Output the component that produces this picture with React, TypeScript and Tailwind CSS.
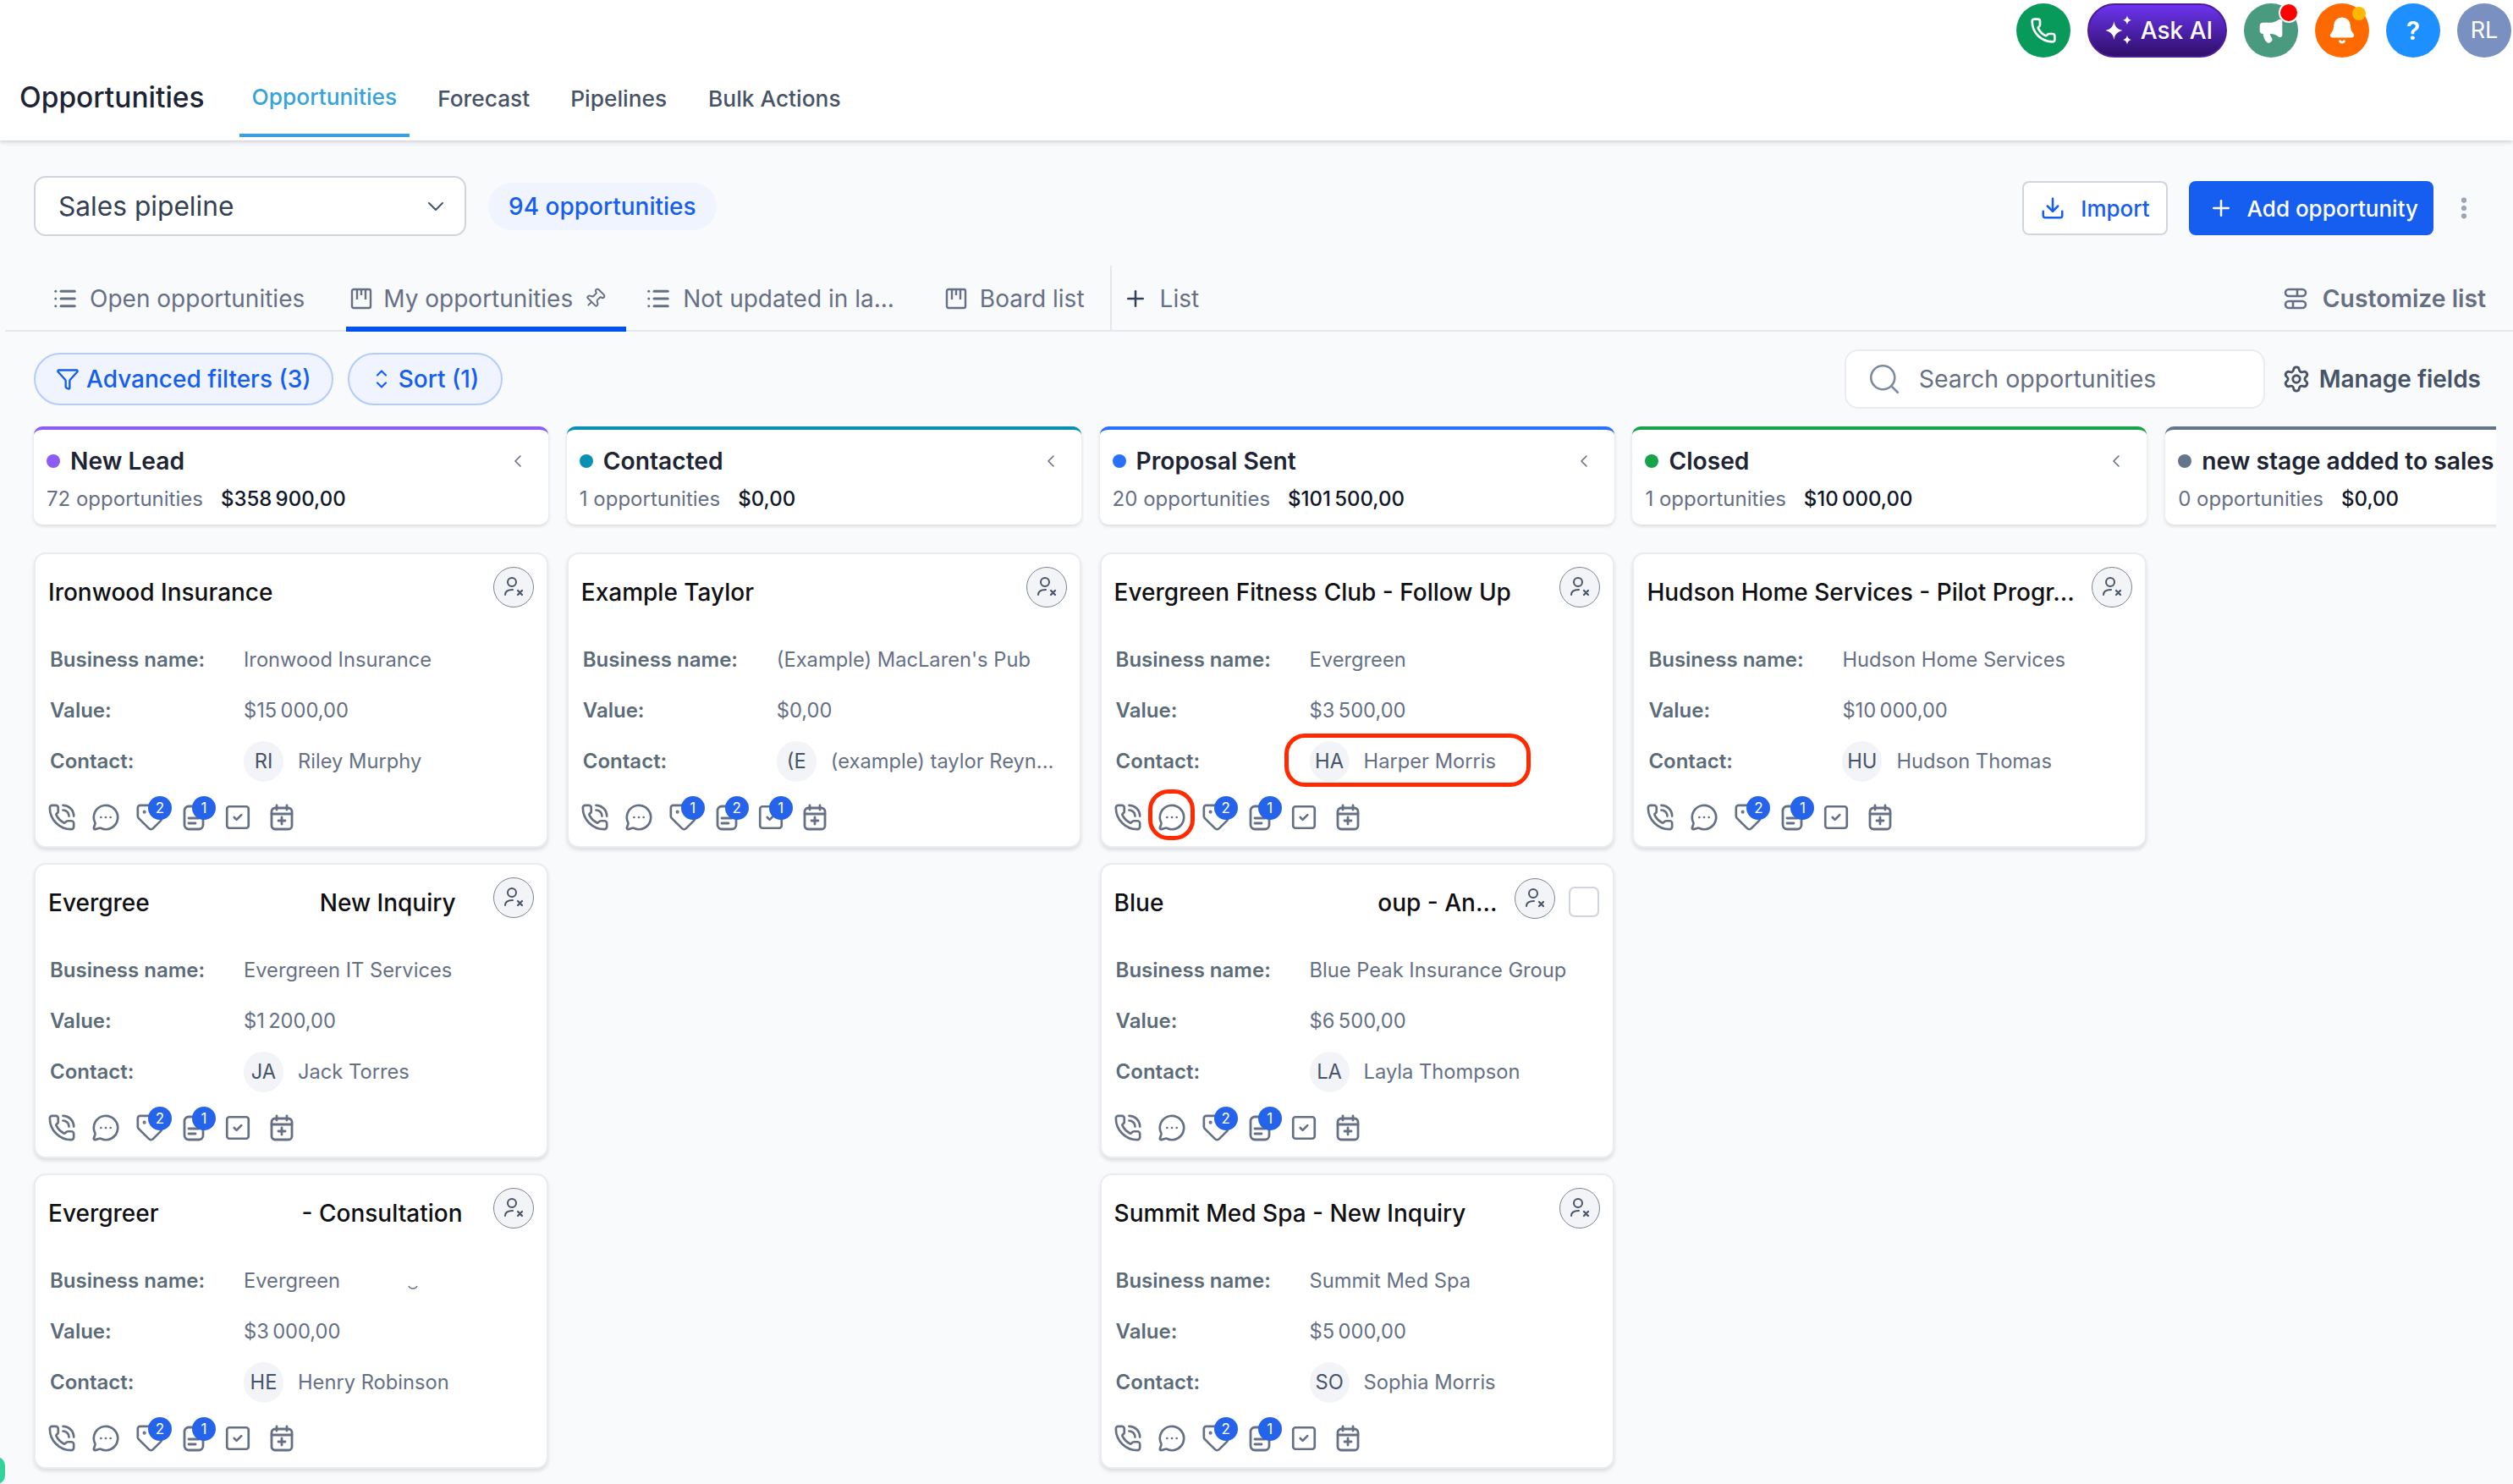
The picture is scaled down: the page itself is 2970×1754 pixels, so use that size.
import {
  Bell,
  ChevronDown,
  ChevronLeft,
  ChevronUp,
  Download,
  EllipsisVertical,
  Funnel,
  List,
  Megaphone,
  MessageCircleMore,
  Phone,
  PhoneCall,
  Pin,
  Plus,
  Search,
  Settings,
  SquareCheck,
  Tag,
} from "lucide-react";
import type { ReactNode } from "react";

interface Deal {
  title: ReactNode;
  business: ReactNode;
  value: string;
  initials: string;
  contact: string;
  badges: [number, number, number?];
  checkbox?: boolean;
}

interface Stage {
  name: string;
  dot: string;
  bar: string;
  count: number;
  total: string;
  deals: Deal[];
  tail?: boolean;
}

const stages: Stage[] = [
  {
    name: "New Lead",
    dot: "bg-[#8b5cf6]",
    bar: "border-t-[#8b5cf6]",
    count: 72,
    total: "$358\u202f900,00",
    tail: true,
    deals: [
      {
        title: "Ironwood Insurance",
        business: "Ironwood Insurance",
        value: "$15\u202f000,00",
        initials: "RI",
        contact: "Riley Murphy",
        badges: [2, 1],
      },
      {
        title: (
          <>
            Evergree<span className="ml-[201px]">New Inquiry</span>
          </>
        ),
        business: "Evergreen IT Services",
        value: "$1\u202f200,00",
        initials: "JA",
        contact: "Jack Torres",
        badges: [2, 1],
      },
      {
        title: (
          <>
            Evergreer<span className="ml-[169px]">- Consultation</span>
          </>
        ),
        business: (
          <>
            Evergreen
            <svg width="12" height="6" viewBox="0 0 12 6" fill="none" stroke="#667085" strokeWidth="1.600" className="ml-[80px] mt-[16px]">
              <path d="M1 1c2 4 8 4 10 0" />
            </svg>
          </>
        ),
        value: "$3\u202f000,00",
        initials: "HE",
        contact: "Henry Robinson",
        badges: [2, 1],
      },
    ],
  },
  {
    name: "Contacted",
    dot: "bg-[#0891b2]",
    bar: "border-t-[#0891b2]",
    count: 1,
    total: "$0,00",
    deals: [
      {
        title: "Example Taylor",
        business: "(Example) MacLaren's Pub",
        value: "$0,00",
        initials: "(E",
        contact: "(example) taylor Reyn...",
        badges: [1, 2, 1],
      },
    ],
  },
  {
    name: "Proposal Sent",
    dot: "bg-[#2970ff]",
    bar: "border-t-[#2970ff]",
    count: 20,
    total: "$101\u202f500,00",
    tail: true,
    deals: [
      {
        title: "Evergreen Fitness Club - Follow Up",
        business: "Evergreen",
        value: "$3\u202f500,00",
        initials: "HA",
        contact: "Harper Morris",
        badges: [2, 1],
      },
      {
        title: (
          <>
            Blue<span className="ml-[253px]">oup - An...</span>
          </>
        ),
        business: "Blue Peak Insurance Group",
        value: "$6\u202f500,00",
        initials: "LA",
        contact: "Layla Thompson",
        badges: [2, 1],
        checkbox: true,
      },
      {
        title: "Summit Med Spa - New Inquiry",
        business: "Summit Med Spa",
        value: "$5\u202f000,00",
        initials: "SO",
        contact: "Sophia Morris",
        badges: [2, 1],
      },
    ],
  },
  {
    name: "Closed",
    dot: "bg-[#16a34a]",
    bar: "border-t-[#16a34a]",
    count: 1,
    total: "$10\u202f000,00",
    deals: [
      {
        title: "Hudson Home Services - Pilot Progr...",
        business: "Hudson Home Services",
        value: "$10\u202f000,00",
        initials: "HU",
        contact: "Hudson Thomas",
        badges: [2, 1],
      },
    ],
  },
];

function Sparkle() {
  return (
    <svg width="40" height="40" viewBox="0 0 36 36" fill="white">
      <path d="M13 8c1 6 3 8 9 10-6 2-8 4-9 10-1-6-3-8-9-10 6-2 8-4 9-10z" />
      <path d="M27 2c.6 3 1.6 4 4.5 5-2.900 1-3.900 2-4.500 5-.6-3-1.600-4-4.500-5 2.900-1 3.900-2 4.500-5z" />
      <path d="M27 23c.6 3 1.600 4 4.500 5-2.900 1-3.900 2-4.500 5-.6-3-1.600-4-4.500-5 2.900-1 3.900-2 4.500-5z" />
    </svg>
  );
}

function BoardIcon() {
  return (
    <svg width="26" height="26" viewBox="0 0 26 26" fill="none" stroke="#667085" strokeWidth="2.4">
      <rect x="2" y="2" width="22" height="22" rx="2" />
      <path d="M8 2v12M13 2v7M18 2v12" />
    </svg>
  );
}

function CustomizeIcon() {
  return (
    <svg width="28" height="28" viewBox="0 0 28 28" fill="none" stroke="#667085" strokeWidth="2.6">
      <rect x="2" y="3" width="24" height="8" rx="4" />
      <rect x="2" y="17" width="24" height="8" rx="4" />
      <path d="M16 3v8M11 17v8" />
    </svg>
  );
}

function NoteIcon() {
  return (
    <svg width="26" height="32" viewBox="0 0 26 32" fill="none" stroke="#667085" strokeWidth="2.800" strokeLinecap="round">
      <rect x="2" y="3" width="22" height="27" rx="5" />
      <path d="M7 17h12M7 23h8" />
    </svg>
  );
}

function CalendarIcon() {
  return (
    <svg width="28" height="32" viewBox="0 0 28 32" fill="none" stroke="#667085" strokeWidth="2.800" strokeLinecap="round">
      <rect x="2" y="5" width="24" height="25" rx="4" />
      <path d="M2 12h24M8 2v5M20 2v5M14 16v8M10 20h8" />
    </svg>
  );
}

function UnassignedIcon() {
  return (
    <svg width="28" height="28" viewBox="0 0 28 28" fill="none" stroke="#475467" strokeWidth="2" strokeLinecap="round">
      <circle cx="12" cy="8" r="5" />
      <path d="M4 23c0-4 3-6 9-6" />
      <path d="M19 18l5 5M24 18l-5 5" strokeWidth="2.200" />
    </svg>
  );
}

function Badge({ n }: { n: number }) {
  return (
    <span className="absolute left-[24px] top-[-9px] flex h-[28px] w-[28px] items-center justify-center rounded-full bg-[#2563eb] text-[17px] leading-none text-white">
      {n}
    </span>
  );
}

function ActionIcons({ badges }: { badges: Deal["badges"] }) {
  const [first, second, third] = badges;
  return (
    <div className="ml-[-10px] flex h-[32px] items-center text-[#667085]">
      <span className="flex w-[52px] justify-center">
        <PhoneCall size={34} strokeWidth={1.900} />
      </span>
      <span className="flex w-[52px] justify-center">
        <MessageCircleMore size={34} strokeWidth={1.900} />
      </span>
      <span className="relative flex h-[32px] w-[52px] items-center justify-center">
        <Tag size={34} strokeWidth={1.900} />
        <Badge n={first} />
      </span>
      <span className="relative flex h-[32px] w-[52px] items-center justify-center">
        <NoteIcon />
        <Badge n={second} />
      </span>
      <span className="relative flex h-[32px] w-[52px] items-center justify-center">
        <SquareCheck size={34} strokeWidth={1.900} />
        {third ? <Badge n={third} /> : null}
      </span>
      <span className="flex w-[52px] justify-center">
        <CalendarIcon />
      </span>
    </div>
  );
}

function DealCard({ deal }: { deal: Deal }) {
  return (
    <div className="relative h-[349px] shrink-0 rounded-[14px] border-2 border-[#eaecf0] bg-white pl-[15px] pr-[15px] pt-[15px] shadow-[0_3px_4px_rgba(16,24,40,0.12)]">
      <div className="flex h-[48px] items-start">
        <div className="mt-[13px] flex-1 whitespace-nowrap text-[28px] font-medium leading-[34px] text-[#101014]">
          {deal.title}
        </div>
        <span className={`flex h-[48px] w-[48px] items-center justify-center rounded-full border border-[#7d8592] bg-[#f2f4f7] ${deal.checkbox ? "mr-[16px] mt-[1px]" : ""}`}>
          <UnassignedIcon />
        </span>
        {deal.checkbox ? (
          <span className="mr-[1px] mt-[11px] h-[36px] w-[36px] rounded-[7px] border-2 border-[#d0d5dd] bg-white" />
        ) : null}
      </div>
      <div className="mt-[32px] grid grid-cols-[229px_1fr] items-center pl-[2px] text-[23.7px] text-[#667085]">
        <div className="flex h-[60px] items-center text-[24px] font-semibold text-[#5b6b78]">Business name:</div>
        <div className="flex h-[60px] items-center whitespace-nowrap">{deal.business}</div>
        <div className="flex h-[60px] items-center text-[24px] font-semibold text-[#5b6b78]">Value:</div>
        <div className="flex h-[60px] items-center whitespace-nowrap">{deal.value}</div>
        <div className="flex h-[60px] items-center text-[24px] font-semibold text-[#5b6b78]">Contact:</div>
        <div className="flex h-[60px] items-center whitespace-nowrap">
          <span className="mr-[17px] flex h-[48px] w-[47px] items-center justify-center rounded-full bg-[#f2f4f7] text-[#475467]">
            {deal.initials}
          </span>
          {deal.contact}
        </div>
      </div>
      <div className="mt-[20px]">
        <ActionIcons badges={deal.badges} />
      </div>
    </div>
  );
}

function StageHeader({ name, dot, bar, count, total, collapse = true }: { name: string; dot: string; bar: string; count: number; total: string; collapse?: boolean }) {
  return (
    <div className={`h-[116px] shrink-0 overflow-hidden rounded-[10px] border-t-4 bg-white pl-[15px] shadow-[0_2px_4px_rgba(16,24,40,0.14)] ${bar}`}>
      <div className="mt-[20px] flex h-[34px] items-center">
        <span className={`mr-[12px] h-[16px] w-[16px] shrink-0 rounded-full ${dot}`} />
        <span className="flex-1 whitespace-nowrap text-[28.2px] font-semibold text-[#1d2433]">{name}</span>
        {collapse ? <ChevronLeft size={24} strokeWidth={1.6} className="mr-[24px] text-[#667085]" /> : null}
      </div>
      <div className="mt-[10px] flex items-center whitespace-nowrap text-[24px]">
        <span className="mr-[21px] text-[#667085]">{count} opportunities</span>
        <span className="font-medium text-[#101828]">{total}</span>
      </div>
    </div>
  );
}

export default function App() {
  return (
    <div className="relative h-[1754px] w-[2970px] overflow-hidden bg-[#f9fafb] [font-family:Inter,sans-serif]">
      <header className="h-[166px] bg-white shadow-[0_2px_5px_rgba(16,24,40,0.18)]">
        <div className="flex h-[68px] items-end justify-end gap-[20px] pr-[2px]">
          <span className="flex h-[64px] w-[64px] items-center justify-center rounded-full bg-[#079a5a] text-white">
            <Phone size={32} strokeWidth={2} />
          </span>
          <span className="flex h-[64px] w-[165px] items-center justify-center gap-[6px] rounded-full border-2 border-[#4c1d95] bg-gradient-to-b from-[#6d35f0] to-[#2f0f6b] text-[28px] font-medium text-white">
            <Sparkle />
            Ask AI
          </span>
          <span className="relative flex h-[64px] w-[64px] items-center justify-center rounded-full bg-[#4a9a80] text-white">
            <Megaphone size={32} fill="white" strokeWidth={2} />
            <span className="absolute right-[-1px] top-[-1px] h-[24px] w-[24px] rounded-full border-2 border-white bg-[#ff0000]" />
          </span>
          <span className="relative flex h-[64px] w-[64px] items-center justify-center rounded-full bg-[#ff6a00] text-white">
            <Bell size={34} fill="white" strokeWidth={2} />
            <span className="absolute right-[4px] top-[4px] h-[16px] w-[16px] rounded-full bg-[#ffb800]" />
          </span>
          <span className="flex h-[64px] w-[64px] items-center justify-center rounded-full bg-[#1e8fff] text-[30px] font-semibold text-white">
            ?
          </span>
          <span className="flex h-[64px] w-[64px] items-center justify-center rounded-full bg-[#7a90c0] text-[27px] text-white">
            RL
          </span>
        </div>
        <div className="flex h-[94px] items-center pl-[23px]">
          <h1 className="mr-[41px] text-[33.5px] font-medium text-[#1d2433]">Opportunities</h1>
          <nav className="flex h-full items-center text-[26.3px] font-medium text-[#475467]">
            <span className="mr-[33px] flex h-full items-center border-b-4 border-[#37a3dc] px-[15px] pt-[4px] text-[#37a3dc]">Opportunities</span>
            <span className="mr-[48px] mt-[4px]">Forecast</span>
            <span className="mr-[49px] mt-[4px]">Pipelines</span>
            <span className="mt-[4px]">Bulk Actions</span>
          </nav>
        </div>
      </header>

      <div className="mt-[42px] flex h-[71px] items-center pl-[40px] pr-[42px]">
        <div className="flex h-[71px] w-[511px] items-center justify-between rounded-[14px] border-2 border-[#d0d5dd] bg-white pl-[27px] pr-[18px] text-[31.7px] text-[#344054]">
          Sales pipeline
          <ChevronDown size={32} strokeWidth={1.5} className="text-[#475467]" />
        </div>
        <span className="ml-[26px] flex h-[56px] items-center rounded-full bg-[#eff4ff] px-[24px] text-[28px] font-medium text-[#155eef]">
          94 opportunities
        </span>
        <div className="ml-auto mt-[5px] flex items-center">
          <button className="flex h-[64px] items-center gap-[18px] rounded-[8px] border-2 border-[#d0d5dd] bg-white px-[19px] text-[26px] font-medium text-[#155eef]">
            <Download size={30} strokeWidth={2} />
            Import
          </button>
          <button className="ml-[25px] flex h-[64px] items-center gap-[16px] rounded-[8px] bg-[#155eef] pl-[23px] pr-[18px] text-[26px] font-medium text-white">
            <Plus size={30} strokeWidth={2} />
            Add opportunity
          </button>
          <EllipsisVertical size={32} strokeWidth={2.6} className="ml-[20px] text-[#98a2b3]" />
        </div>
      </div>

      <div className="ml-[6px] flex h-[113px] items-end border-b-2 border-[#e4e7ec] text-[28px] text-[#667085]">
        <div className="flex h-[56px] items-center gap-[14px] pb-[18px] pl-[56px]">
          <List size={30} strokeWidth={2.4} />
          Open opportunities
        </div>
        <div className="mb-[-2px] ml-[49px] flex h-[58px] items-center gap-[13px] border-b-[6px] border-[#0050ee] pb-[14px] pl-[5px] pr-[24px]">
          <BoardIcon />
          My opportunities
          <Pin size={26} strokeWidth={1.8} className="rotate-45" />
        </div>
        <div className="ml-[23px] flex h-[56px] items-center gap-[14px] pb-[18px]">
          <List size={30} strokeWidth={2.4} />
          Not updated in la...
        </div>
        <div className="ml-[60px] flex h-[56px] items-center gap-[15px] pb-[18px]">
          <BoardIcon />
          Board list
        </div>
        <div className="ml-[30px] flex h-[76px] items-center gap-[14px] border-l-2 border-[#e4e7ec] pb-[18px] pl-[13px] pt-[20px]">
          <Plus size={30} strokeWidth={2} className="text-[#344054]" />
          List
        </div>
        <div className="ml-auto mr-[32px] flex h-[56px] items-center gap-[18px] pb-[18px] text-[28.3px] font-semibold">
          <CustomizeIcon />
          Customize list
        </div>
      </div>

      <div className="flex h-[112px] items-center pl-[40px] pr-[38px]">
        <button className="flex h-[62px] items-center gap-[8px] rounded-full border-2 border-[#b2ccff] bg-[#eff4ff] px-[24px] text-[28px] font-medium text-[#155eef]">
          <Funnel size={28} strokeWidth={2} />
          Advanced filters (3)
        </button>
        <button className="ml-[17px] flex h-[62px] items-center gap-[10px] rounded-full border-2 border-[#b2ccff] bg-[#eff4ff] pl-[28px] pr-[26px] text-[28px] font-medium text-[#155eef]">
          <span className="flex flex-col">
            <ChevronUp size={20} strokeWidth={2.6} className="mb-[-3px]" />
            <ChevronDown size={20} strokeWidth={2.6} className="mt-[-3px]" />
          </span>
          Sort (1)
        </button>
        <div className="ml-auto flex h-[70px] w-[497px] items-center gap-[20px] rounded-[16px] border-2 border-[#eaecf0] bg-white pl-[24px] text-[28.5px] text-[#667085]">
          <Search size={42} strokeWidth={1.5} className="text-[#7d8ba0]" />
          Search opportunities
        </div>
        <div className="ml-[20px] flex items-center gap-[10px] text-[28px] font-semibold text-[#475467]">
          <Settings size={34} strokeWidth={2} />
          Manage fields
        </div>
      </div>

      <div className="flex w-[2950px] gap-[21.8px] overflow-hidden pl-[40px]">
        {stages.map((stage) => (
          <section key={stage.name} className="flex w-[608px] shrink-0 flex-col gap-[18px]">
            <div className="mb-[15px]">
              <StageHeader name={stage.name} dot={stage.dot} bar={stage.bar} count={stage.count} total={stage.total} />
            </div>
            {stage.deals.map((deal, index) => (
              <DealCard key={index} deal={deal} />
            ))}
            {stage.tail ? <div className="h-[40px] shrink-0 rounded-[14px] border-2 border-[#eaecf0] bg-white" /> : null}
          </section>
        ))}
        <section className="w-[608px] shrink-0">
          <StageHeader name="new stage added to sales" dot="bg-[#64748b]" bar="border-t-[#64748b]" count={0} total="$0,00" collapse={false} />
        </section>
      </div>

      {/* red review marks over the Harper Morris card */}
      <div className="absolute left-[1518px] top-[867px] h-[63px] w-[291px] rounded-[24px] border-[5px] border-[#ff2a00]" />
      <div className="absolute left-[1357px] top-[933px] h-[60px] w-[55px] rounded-[24px] border-[5px] border-[#ff2a00]" />
      <div className="absolute bottom-0 left-[-14px] h-[32px] w-[20px] rounded-full bg-[#34d399]" />
    </div>
  );
}
